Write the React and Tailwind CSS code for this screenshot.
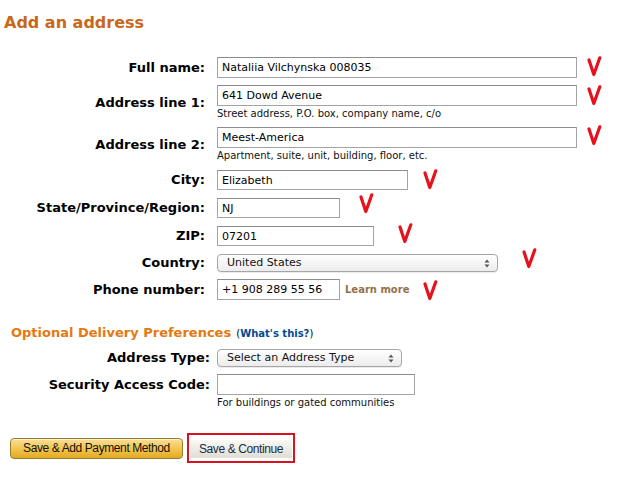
import React from 'react';

const verdana = { fontFamily: '"DejaVu Sans", Verdana, sans-serif' };

// hand-drawn red tick; wrapped in a zero-height box so it never changes row height
function Check({ className = '' }) {
  return (
    <div className={'flex h-0 shrink-0 items-center ' + className}>
      <svg width="15" height="21" viewBox="0 0 15 21">
        <path d="M2 4 L6.8 18.5 L12.8 1.8" fill="none" stroke="#e5121d" strokeWidth="3.2" strokeLinecap="round" strokeLinejoin="round" />
      </svg>
    </div>
  );
}

function Arrows() {
  return (
    <svg width="6" height="9" viewBox="0 0 6 9" className="shrink-0">
      <path d="M3 0.5 L5.5 3.5 L0.5 3.5 Z" fill="#555" />
      <path d="M3 8.5 L5.5 5.5 L0.5 5.5 Z" fill="#555" />
    </svg>
  );
}

function TextBox({ value, w, h = 'h-[21px]' }) {
  return (
    <input
      readOnly
      value={value}
      className={`${w} ${h} border border-[#a3a3a3] border-t-[#8c8c8c] bg-white px-[4px] text-[11px] text-black outline-none`}
      style={verdana}
    />
  );
}

function Select({ label, w, h }) {
  return (
    <div className={`${w} ${h} flex items-center justify-between rounded-[4px] border border-[#a6a6a6] bg-gradient-to-b from-white to-[#ececec] pl-[9px] pr-[7px] text-[11px] text-[#111] shadow-[0_1px_0_rgba(0,0,0,0.08)]`}>
      <span>{label}</span>
      <Arrows />
    </div>
  );
}

function Row({ label, labelW = 'w-[205px]', gap = 'ml-[12px]', className = '', labelClass = '', children }) {
  return (
    <div className={`flex items-center ${className}`}>
      <div className={`${labelW} shrink-0 text-right text-[13px] font-bold leading-[16px] text-black ${labelClass}`}>{label}</div>
      <div className={`${gap} flex flex-col`}>{children}</div>
    </div>
  );
}

function Hint({ children }) {
  return <div className="h-[14px] pt-[1px] text-[10px] leading-[13px] text-[#111]">{children}</div>;
}

export default function App() {
  return (
    <div className="h-[496px] w-[629px] overflow-hidden bg-white" style={verdana}>
      <h1 className="pl-[4px] pt-[13px] text-[16px] font-bold leading-[20px] text-[#c9671a]">Add an address</h1>

      <div className="mt-[24px] flex flex-col">
        <Row label="Full name:">
          <div className="flex items-center">
            <TextBox value="Nataliia Vilchynska 008035" w="w-[360px]" />
            <Check className="ml-[10px] -translate-y-[1px]" />
          </div>
        </Row>

        <Row label="Address line 1:" className="mt-[7px]">
          <div className="flex items-center">
            <TextBox value="641 Dowd Avenue" w="w-[360px]" />
            <Check className="ml-[10px]" />
          </div>
          <Hint>Street address, P.O. box, company name, c/o</Hint>
        </Row>

        <Row label="Address line 2:" className="mt-[7px]">
          <div className="flex items-center">
            <TextBox value="Meest-America" w="w-[360px]" />
            <Check className="ml-[10px] -translate-y-[2px]" />
          </div>
          <Hint>Apartment, suite, unit, building, floor, etc.</Hint>
        </Row>

        <Row label="City:" className="mt-[8px]">
          <div className="flex items-center">
            <TextBox value="Elizabeth" w="w-[191px]" h="h-[20px]" />
            <Check className="ml-[15px] -translate-y-[1px]" />
          </div>
        </Row>

        <Row label="State/Province/Region:" className="mt-[8px]">
          <div className="flex items-center">
            <TextBox value="NJ" w="w-[123px]" h="h-[20px]" />
            <Check className="ml-[19px] -translate-y-[5px]" />
          </div>
        </Row>

        <Row label="ZIP:" className="mt-[8px]">
          <div className="flex items-center">
            <TextBox value="07201" w="w-[157px]" h="h-[20px]" />
            <Check className="ml-[24px] -translate-y-[3px]" />
          </div>
        </Row>

        <Row label="Country:" className="mt-[8px]">
          <div className="flex items-center">
            <Select label="United States" w="w-[281px]" h="h-[18px]" />
            <Check className="ml-[24px] -translate-y-[5px]" />
          </div>
        </Row>

        <Row label="Phone number:" className="mt-[7px]">
          <div className="flex items-center">
            <TextBox value="+1 908 289 55 56" w="w-[123px]" />
            <span className="ml-[5px] text-[10px] font-bold text-[#94714a]">Learn more</span>
            <Check className="ml-[14px] translate-y-[1px]" />
          </div>
        </Row>
      </div>

      <div className="mt-[23px] pl-[11px] leading-[18px]">
        <span className="text-[13px] font-bold text-[#e47911]">Optional Delivery Preferences</span>{' '}
        <span className="text-[10px] text-black">
          (<span className="font-bold text-[#004b91]">What's this?</span>)
        </span>
      </div>

      <div className="mt-[6px] flex flex-col">
        <Row label="Address Type:" labelW="w-[210px]" gap="ml-[7px]">
          <Select label="Select an Address Type" w="w-[185px]" h="h-[18px]" />
        </Row>
        <Row label="Security Access Code:" labelW="w-[210px]" gap="ml-[7px]" className="mt-[7px] !items-start" labelClass="pt-[3px]">
          <TextBox value="" w="w-[198px]" />
          <Hint>For buildings or gated communities</Hint>
        </Row>
      </div>

      <div className="mt-[24px] flex items-center pl-[10px]" style={{ fontFamily: '"Liberation Sans", Arial, sans-serif' }}>
        <button className="h-[21px] w-[173px] rounded-[4px] border border-[#9c7b2a] bg-gradient-to-b from-[#f9df98] via-[#f2c64e] to-[#e3aa22] text-[12px] leading-[19px] tracking-[-0.4px] text-[#111] shadow-[inset_0_1px_0_rgba(255,255,255,0.6)]">
          Save &amp; Add Payment Method
        </button>
        <div className="ml-[4px] border-2 border-[#d9121f] p-[1px]">
          <button className="h-[18px] w-[102px] bg-gradient-to-b from-[#fafaf5] to-[#deded3] text-[12px] leading-[18px] tracking-[-0.4px] text-[#1c2a48]">
            Save &amp; Continue
          </button>
        </div>
      </div>
    </div>
  );
}
